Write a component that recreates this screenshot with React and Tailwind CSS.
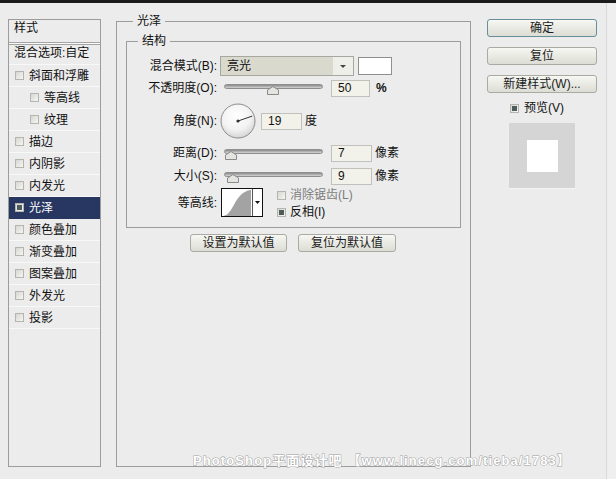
import React from "react";

function Box({ checked }) {
  return (
    <span className="inline-flex w-[9px] h-[9px] shrink-0 items-center justify-center border border-[#b5b5b0] bg-linear-to-br from-[#d6d6d2] to-[#f6f6f2]">
      {checked && <span className="w-[5px] h-[5px] bg-[#4e5c5c]" />}
    </span>
  );
}

const items = [
  ["斜面和浮雕", false, false],
  ["等高线", true, false],
  ["纹理", true, false],
  ["描边", false, false],
  ["内阴影", false, false],
  ["内发光", false, false],
  ["光泽", false, true],
  ["颜色叠加", false, false],
  ["渐变叠加", false, false],
  ["图案叠加", false, false],
  ["外发光", false, false],
  ["投影", false, false],
];

function LeftPanel() {
  return (
    <div className="ml-[8px] mt-[16px] w-[93px] h-[448px] border border-[#9c9c9c] flex flex-col shrink-0">
      <div className="h-[23px] border-b border-[#a4a4a4] pl-[5px] pt-[1px] text-[12px] leading-[14px] text-[#111]">样式</div>
      <div className="h-[1px] bg-[#fafafa]" />
      <div className="h-[1px] bg-[#a4a4a4]" />
      <div className="h-[20px] border-b border-[#f8f8f8] pl-[5px] pt-[1px] text-[12px] leading-[14px] text-[#111] whitespace-nowrap">混合选项:自定</div>
      {items.map(([t, indent, sel]) => (
        <div
          key={t}
          className={
            "h-[22px] flex items-center gap-[5px] border-b text-[12px] leading-[14px] " +
            (indent ? "pl-[21px] " : "pl-[6px] ") +
            (sel ? "bg-[#283761] text-white border-[#283761]" : "text-[#111] border-[#f8f8f8]")
          }
        >
          <Box checked={sel} />
          <span>{t}</span>
        </div>
      ))}
    </div>
  );
}

function Slider({ pos }) {
  return (
    <div className="relative w-[99px] h-[14px] shrink-0">
      <div className="absolute left-0 right-0 top-[3px] h-[5px] rounded-full border border-[#8e8e8e] bg-linear-to-b from-[#8a8a8a] to-[#d4d4d4]" />
      <svg className="absolute top-[5px]" style={{ left: pos - 6 }} width="12" height="9" viewBox="0 0 12 9">
        <path d="M0.5,4 L6,0.5 L11.5,4 L11.5,8.5 L0.5,8.5 Z" fill="#e4e4e0" stroke="#8a8a8a" strokeWidth="1" />
      </svg>
    </div>
  );
}

function Input({ v, w }) {
  return (
    <div className={"h-[17px] border border-[#c0c0bc] bg-[#f2f1ea] pl-[6px] text-[12px] leading-[15px] text-[#111] shrink-0 " + w}>
      {v}
    </div>
  );
}

function Label({ children }) {
  return <div className="w-[90px] shrink-0 text-right text-[12px] leading-[14px] text-[#111] whitespace-nowrap">{children}</div>;
}

function Button({ children, primary, className }) {
  return (
    <div
      className={
        "h-[18px] flex items-center justify-center rounded-[3px] bg-linear-to-b from-[#f7f7f3] to-[#dcddd4] text-[12px] leading-[14px] text-[#1c1c1c] whitespace-nowrap " +
        (primary ? "border-[1.5px] border-[#678f9a] " : "border border-[#a9aaa2] ") +
        (className || "")
      }
    >
      {children}
    </div>
  );
}

function MainGroup() {
  return (
    <div className="relative ml-[15px] mt-[18px] w-[355px] h-[446px] border border-[#9c9c9c] shrink-0">
      <div className="absolute -top-[8px] left-[16px] px-[4px] bg-[#ececec] text-[12px] leading-[14px] text-[#111]">光泽</div>
      <div className="relative ml-[9px] mt-[19px] w-[335px] border border-[#9c9c9c] pt-[14px] pb-[10px]">
        <div className="absolute -top-[8px] left-[11px] px-[4px] bg-[#ececec] text-[12px] leading-[14px] text-[#111]">结构</div>
        {/* blend mode */}
        <div className="h-[20px] flex items-center">
          <Label>混合模式(B):</Label>
          <div className="ml-[3px] w-[134px] h-[20px] flex border border-[#a7a7a2] bg-[#dad9ce]">
            <div className="flex-1 pl-[6px] text-[12px] leading-[18px] text-[#111]">亮光</div>
            <div className="w-[20px] bg-[#efefea] flex items-center justify-center">
              <svg width="6" height="3" viewBox="0 0 6 3"><path d="M0,0 L6,0 L3,3 Z" fill="#444" /></svg>
            </div>
          </div>
          <div className="ml-[4px] w-[34px] h-[18px] border border-[#8f8f8f] bg-white" />
        </div>
        {/* opacity */}
        <div className="h-[24px] flex items-center">
          <Label>不透明度(O):</Label>
          <div className="ml-[7px]"><Slider pos={49} /></div>
          <div className="ml-[8px]"><Input v="50" w="w-[39px]" /></div>
          <div className="ml-[6px] text-[12px] leading-[14px] text-[#111] font-bold">%</div>
        </div>
        {/* angle */}
        <div className="h-[42px] flex items-center">
          <Label>角度(N):</Label>
          <svg className="ml-[3px] shrink-0" width="36" height="36" viewBox="0 0 36 36">
            <defs>
              <radialGradient id="dial" cx="0.45" cy="0.35" r="0.7">
                <stop offset="0" stopColor="#ffffff" />
                <stop offset="0.6" stopColor="#f2f2f2" />
                <stop offset="1" stopColor="#cfcfcf" />
              </radialGradient>
            </defs>
            <circle cx="18" cy="18" r="17" fill="url(#dial)" stroke="#8c8c8c" strokeWidth="1" />
            <line x1="18" y1="18" x2="32.2" y2="13.1" stroke="#333" strokeWidth="1" />
            <circle cx="18" cy="18" r="1.6" fill="#333" />
          </svg>
          <div className="ml-[5px]"><Input v="19" w="w-[41px]" /></div>
          <div className="ml-[3px] text-[12px] leading-[14px] text-[#111]">度</div>
        </div>
        {/* distance */}
        <div className="h-[22px] flex items-center">
          <Label>距离(D):</Label>
          <div className="ml-[7px]"><Slider pos={7} /></div>
          <div className="ml-[8px]"><Input v="7" w="w-[41px]" /></div>
          <div className="ml-[3px] text-[12px] leading-[14px] text-[#111]">像素</div>
        </div>
        {/* size */}
        <div className="h-[24px] flex items-center">
          <Label>大小(S):</Label>
          <div className="ml-[7px]"><Slider pos={9} /></div>
          <div className="ml-[8px]"><Input v="9" w="w-[41px]" /></div>
          <div className="ml-[3px] text-[12px] leading-[14px] text-[#111]">像素</div>
        </div>
        {/* contour */}
        <div className="h-[29px] flex">
          <div className="self-center"><Label>等高线:</Label></div>
          <div className="ml-[4px] w-[42px] h-[29px] border border-[#111] bg-white flex shrink-0">
            <svg width="30" height="27" viewBox="0 0 30 27" className="shrink-0">
              <path d="M1,27 C12,26 12,3 29,1 L29,27 Z" fill="#a3a3a3" />
            </svg>
            <div className="w-[1px] bg-[#555]" />
            <div className="flex-1 flex items-center justify-center">
              <svg width="5" height="3" viewBox="0 0 5 3"><path d="M0,0 L5,0 L2.5,3 Z" fill="#111" /></svg>
            </div>
          </div>
          <div className="ml-[14px] flex flex-col gap-[3px]">
            <div className="h-[14px] flex items-center gap-[4px] text-[12px] leading-[14px] text-[#7c7c7c]">
              <Box />
              <span>消除锯齿(L)</span>
            </div>
            <div className="h-[14px] flex items-center gap-[4px] text-[12px] leading-[14px] text-[#111]">
              <Box checked />
              <span>反相(I)</span>
            </div>
          </div>
        </div>
      </div>
      <div className="ml-[73px] mt-[6px] flex gap-[11px]">
        <Button className="w-[97px]">设置为默认值</Button>
        <Button className="w-[98px]">复位为默认值</Button>
      </div>
    </div>
  );
}

function RightCol() {
  return (
    <div className="ml-[16px] mt-[16px] w-[110px] flex flex-col shrink-0">
      <Button primary>确定</Button>
      <Button className="mt-[10px]">复位</Button>
      <Button className="mt-[10px]">新建样式(W)...</Button>
      <div className="mt-[8px] h-[14px] pl-[23px] flex items-center gap-[5px] text-[12px] leading-[14px] text-[#111]">
        <Box checked />
        <span>预览(V)</span>
      </div>
      <div className="mt-[8px] ml-[22px] w-[66px] h-[66px] bg-[#d5d5d5] border-b border-[#f4f4f4] flex items-center justify-center">
        <div className="w-[31px] h-[32px] bg-white" />
      </div>
    </div>
  );
}

export default function App() {
  return (
    <div className="relative w-[616px] h-[479px] overflow-hidden bg-[#ececec] font-['Liberation_Sans','Noto_Sans_CJK_SC',sans-serif] flex flex-col">
      <div className="h-[3px] bg-[#1b1b1b] shrink-0" />
      <div className="flex flex-1">
        <LeftPanel />
        <MainGroup />
        <RightCol />
        <div className="ml-auto w-[10px] border-l border-[#d9d9d9] bg-[#efefef]" />
      </div>
      <div className="absolute left-[193px] top-[454px] text-[13px] leading-none font-bold tracking-[1.1px] text-white whitespace-nowrap [-webkit-text-stroke:1px_#a0a0a0] [paint-order:stroke_fill]">
        PhotoShop平面设计吧 【www.linecg.com/tieba/1783】
      </div>
    </div>
  );
}
